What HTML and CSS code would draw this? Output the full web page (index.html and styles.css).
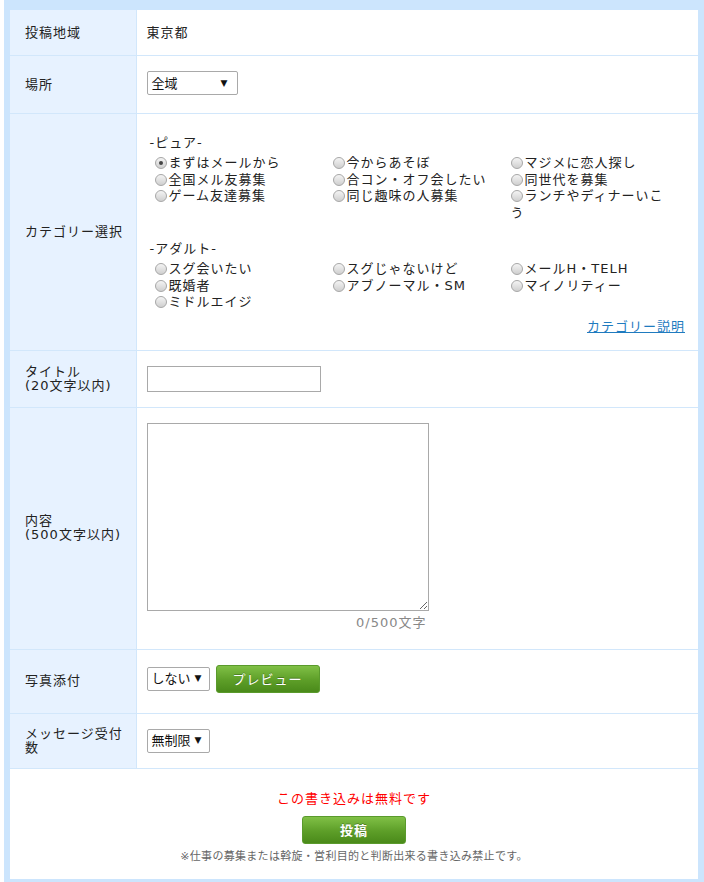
FILE: index.html
```html
<!DOCTYPE html>
<html lang="ja">
<head>
<meta charset="utf-8">
<title>投稿</title>
<link rel="stylesheet" href="styles.css">
</head>
<body>
<div class="page">
  <div class="box">
    <table class="form">
      <tr class="r1">
        <th>投稿地域</th>
        <td>東京都</td>
      </tr>
      <tr class="r2">
        <th>場所</th>
        <td><span class="select w90"><span>全域</span><span class="arrow">▼</span></span></td>
      </tr>
      <tr class="r3">
        <th>カテゴリー選択</th>
        <td>
          <div class="cat">
            <div class="cat-head">-ピュア-</div>
            <div class="radios">
              <label class="item"><span class="radio on"></span>まずはメールから</label>
              <label class="item"><span class="radio"></span>今からあそぼ</label>
              <label class="item"><span class="radio"></span>マジメに恋人探し</label>
              <label class="item"><span class="radio"></span>全国メル友募集</label>
              <label class="item"><span class="radio"></span>合コン・オフ会したい</label>
              <label class="item"><span class="radio"></span>同世代を募集</label>
              <label class="item"><span class="radio"></span>ゲーム友達募集</label>
              <label class="item"><span class="radio"></span>同じ趣味の人募集</label>
              <label class="item"><span class="radio"></span>ランチやディナーいこう</label>
            </div>
            <div class="cat-head second">-アダルト-</div>
            <div class="radios">
              <label class="item"><span class="radio"></span>スグ会いたい</label>
              <label class="item"><span class="radio"></span>スグじゃないけど</label>
              <label class="item"><span class="radio"></span>メールH・TELH</label>
              <label class="item"><span class="radio"></span>既婚者</label>
              <label class="item"><span class="radio"></span>アブノーマル・SM</label>
              <label class="item"><span class="radio"></span>マイノリティー</label>
              <label class="item"><span class="radio"></span>ミドルエイジ</label>
            </div>
            <div class="cat-link"><a href="#">カテゴリー説明</a></div>
          </div>
        </td>
      </tr>
      <tr class="r4">
        <th>タイトル<br>(20文字以内)</th>
        <td><input class="title-input" type="text"></td>
      </tr>
      <tr class="r5">
        <th>内容<br>(500文字以内)</th>
        <td>
          <textarea class="body-input"></textarea>
          <div class="counter">0/500文字</div>
        </td>
      </tr>
      <tr class="r6">
        <th>写真添付</th>
        <td>
          <div class="inline-row">
            <span class="select w63"><span>しない</span><span class="arrow">▼</span></span>
            <button class="green-btn preview" type="button">プレビュー</button>
          </div>
        </td>
      </tr>
      <tr class="r7">
        <th>メッセージ受付数</th>
        <td><span class="select w63"><span>無制限</span><span class="arrow">▼</span></span></td>
      </tr>
    </table>
    <div class="footer">
      <p class="free">この書き込みは無料です</p>
      <button class="green-btn submit" type="button">投稿</button>
      <p class="note">※仕事の募集または斡旋・営利目的と判断出来る書き込み禁止です。</p>
    </div>
  </div>
</div>
</body>
</html>
```
FILE: styles.css
```css
* { box-sizing: border-box; }
html, body { margin: 0; padding: 0; background: #fff; }
body {
  font-family: "DejaVu Sans", "Noto Sans CJK JP", sans-serif;
  font-size: 13px;
  color: #222;
}
.page { padding-left: 4px; }
.box {
  width: 700px;
  border: 6px solid #cce5fd;
  border-top-width: 10px;
  border-bottom-width: 10px;
  background: #fff;
}
.form {
  width: 100%;
  border-collapse: collapse;
  letter-spacing: 1px;
}
.form tr { border-bottom: 1px solid #d2e7fb; }
.form th {
  width: 126px;
  background: #e7f2ff;
  border-right: 1px solid #d2e7fb;
  text-align: left;
  font-weight: normal;
  padding: 0 10px 0 15px;
  line-height: 14px;
  vertical-align: middle;
}
.form td {
  padding: 15px 10px;
  line-height: 15px;
  vertical-align: top;
}
.r1 td { padding-bottom: 15px; }
.r2 td { padding-bottom: 18px; }
.r3 td { padding-bottom: 15px; }
.r4 td { padding-bottom: 15px; }
.r5 td { padding-bottom: 18px; }
.r6 td { padding-bottom: 20px; }
.r7 td { padding-bottom: 15px; }

.select {
  display: inline-flex;
  align-items: center;
  justify-content: space-between;
  height: 24px;
  border: 1px solid #a9a9a9;
  border-radius: 2px;
  background: #fff;
  padding: 0 9px 0 4px;
  letter-spacing: 0;
  font-size: 13px;
  color: #111;
}
.select .arrow { font-size: 9px; line-height: 1; }
.w90 { width: 91px; }
.w63 { width: 63px; padding-right: 7px; }

.cat { padding: 6px 0 0 3px; line-height: 16px; }
.cat-head { height: 16px; }
.cat-head.second { margin-top: 20px; }
.radios {
  margin-top: 4px;
  padding-left: 5px;
  display: grid;
  grid-template-columns: 166px 166px 166px;
  column-gap: 12px;
  line-height: 16.5px;
}
.item { display: block; }
.radio {
  display: inline-block;
  width: 12px;
  height: 12px;
  border: 1px solid #a8a8a8;
  border-radius: 50%;
  background: linear-gradient(#f4f4f4, #cfcfcf);
  vertical-align: -2px;
  margin-right: 2px;
  position: relative;
}
.radio.on::after {
  content: "";
  position: absolute;
  left: 3px;
  top: 3px;
  width: 4px;
  height: 4px;
  border-radius: 50%;
  background: #444;
}
.cat-link {
  margin-top: 8px;
  text-align: right;
  padding-right: 3px;
}
.cat-link a { color: #1f7bbf; text-decoration: underline; }

.title-input {
  display: block;
  width: 174px;
  height: 26px;
  border: 1px solid #a9a9a9;
  margin: 0;
  padding: 0;
}
.body-input {
  display: block;
  width: 282px;
  height: 188px;
  border: 1px solid #a9a9a9;
  margin: 0;
  padding: 2px;
  resize: both;
}
.counter {
  width: 282px;
  text-align: right;
  color: #888;
  margin-top: 3px;
  line-height: 17px;
  padding-right: 2px;
}

.inline-row { display: flex; align-items: center; }
.green-btn {
  border: 1px solid #5a9a2c;
  border-radius: 3px;
  background: linear-gradient(#80c046, #5d9e28 55%, #4a8a1a);
  color: #fff;
  font-family: "DejaVu Sans", "Noto Sans CJK JP", sans-serif;
  font-size: 13px;
  letter-spacing: 1px;
  text-shadow: 0 -1px 0 rgba(0,0,0,0.25);
  padding: 0;
  cursor: pointer;
}
.preview { width: 104px; height: 28px; margin-left: 6px; }

.footer {
  text-align: center;
  padding: 22px 0 15px;
  letter-spacing: 1px;
}
.free {
  margin: 0;
  color: #f00;
  line-height: 16px;
}
.submit {
  display: inline-block;
  width: 104px;
  height: 28px;
  margin-top: 9px;
  font-weight: bold;
}
.note {
  margin: 6px 0 0;
  font-size: 11px;
  letter-spacing: 0.3px;
  color: #666;
  line-height: 14px;
}
```
